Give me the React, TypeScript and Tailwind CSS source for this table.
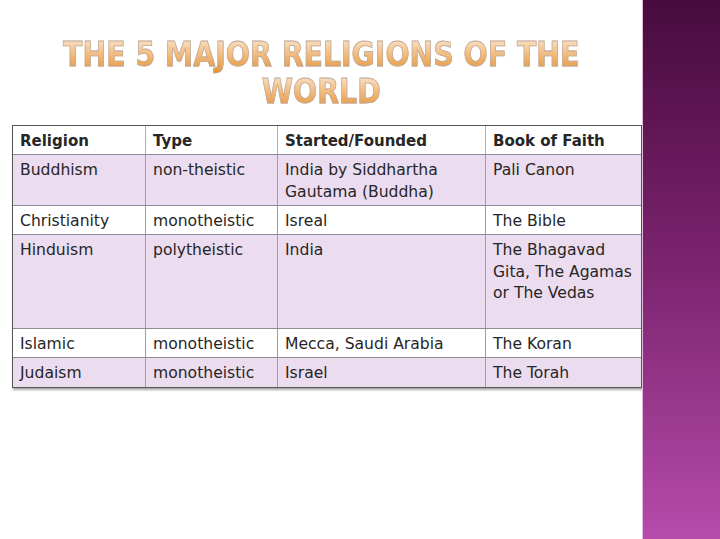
import React from "react";

const rows: { cells: string[][]; h: number; bg: string }[] = [
  { cells: [["Buddhism"], ["non-theistic"], ["India by Siddhartha", "Gautama (Buddha)"], ["Pali Canon"]], h: 51, bg: "bg-[#ecdcef]" },
  { cells: [["Christianity"], ["monotheistic"], ["Isreal"], ["The Bible"]], h: 29, bg: "bg-white" },
  { cells: [["Hinduism"], ["polytheistic"], ["India"], ["The Bhagavad", "Gita, The Agamas", "or The Vedas"]], h: 94, bg: "bg-[#ecdcef]" },
  { cells: [["Islamic"], ["monotheistic"], ["Mecca, Saudi Arabia"], ["The Koran"]], h: 29, bg: "bg-white" },
  { cells: [["Judaism"], ["monotheistic"], ["Israel"], ["The Torah"]], h: 29, bg: "bg-[#ecdcef]" },
];

const widths = ["w-[133px]", "w-[132px]", "w-[208px]", "w-[157px]"];

function TitleLine({ text }: { text: string }) {
  return (
    <div
      className="text-center font-bold uppercase text-[33px] leading-[37px] bg-gradient-to-b from-[#fce8d2] via-[#f3bb7c] to-[#e3922f] bg-clip-text text-transparent"
      style={{ WebkitTextStroke: "0.8px #b9aba3" }}
    >
      {text}
    </div>
  );
}

export default function App() {
  return (
    <div className="w-[720px] h-[539px] flex bg-white overflow-hidden" style={{ fontFamily: "'DejaVu Sans', sans-serif" }}>
      <div className="w-[642px] h-full flex flex-col">
        <div className="pt-[36px] h-[125px] flex flex-col items-center">
          <div className="flex flex-col items-center scale-x-[0.86]">
            <TitleLine text="The 5 Major Religions of the" />
            <TitleLine text="World" />
          </div>
        </div>
        <div className="ml-[12px] w-[630px] border border-[#555] shadow-[1px_2px_2px_rgba(0,0,0,0.35)] text-[15.6px] leading-[21.5px] text-[#262626]">
          <div className="flex h-[29px] bg-white border-b border-[#8f8a95] font-bold text-[15px]">
            {["Religion", "Type", "Started/Founded", "Book of Faith"].map((t, i) => (
              <div key={i} className={`${widths[i]} shrink-0 px-[7px] pt-[5px] ${i < 3 ? "border-r border-[#bba7c2]" : ""}`}>
                {t}
              </div>
            ))}
          </div>
          {rows.map((r, ri) => (
            <div
              key={ri}
              className={`flex ${r.bg} ${ri < rows.length - 1 ? "border-b border-[#8f8a95]" : ""}`}
              style={{ height: r.h }}
            >
              {r.cells.map((c, i) => (
                <div key={i} className={`${widths[i]} shrink-0 px-[7px] pt-[5px] ${i < 3 ? "border-r border-[#b58cc2]" : ""}`}>
                  {c.map((l, j) => (
                    <div key={j} className="whitespace-nowrap">{l}</div>
                  ))}
                </div>
              ))}
            </div>
          ))}
        </div>
      </div>
      <div className="w-[78px] h-full bg-gradient-to-b from-[#480b3e] via-[#7d2470] to-[#b64bab] border-l border-[#e3b9dc]" />
    </div>
  );
}
